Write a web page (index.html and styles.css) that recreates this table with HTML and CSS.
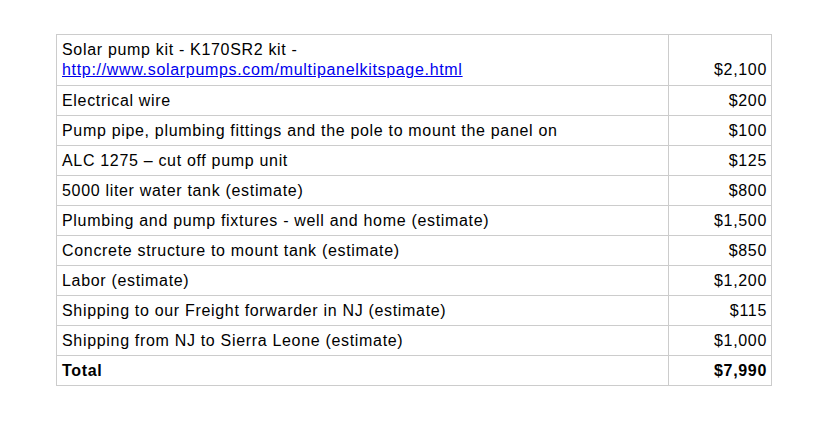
FILE: index.html
```html
<!DOCTYPE html>
<html lang="en">
<head>
<meta charset="utf-8">
<title>Solar pump budget</title>
<link rel="stylesheet" href="styles.css">
</head>
<body>
<table class="budget">
  <tbody>
    <tr class="first">
      <td class="item">Solar pump kit - K170SR2 kit -<br><a class="link" href="#">http://www.solarpumps.com/multipanelkitspage.html</a></td>
      <td class="cost">$2,100</td>
    </tr>
    <tr><td class="item">Electrical wire</td><td class="cost">$200</td></tr>
    <tr><td class="item">Pump pipe, plumbing fittings and the pole to mount the panel on</td><td class="cost">$100</td></tr>
    <tr><td class="item">ALC 1275 – cut off pump unit</td><td class="cost">$125</td></tr>
    <tr><td class="item">5000 liter water tank (estimate)</td><td class="cost">$800</td></tr>
    <tr><td class="item">Plumbing and pump fixtures - well and home (estimate)</td><td class="cost">$1,500</td></tr>
    <tr><td class="item">Concrete structure to mount tank (estimate)</td><td class="cost">$850</td></tr>
    <tr><td class="item">Labor (estimate)</td><td class="cost">$1,200</td></tr>
    <tr><td class="item">Shipping to our Freight forwarder in NJ (estimate)</td><td class="cost">$115</td></tr>
    <tr><td class="item">Shipping from NJ to Sierra Leone (estimate)</td><td class="cost">$1,000</td></tr>
    <tr class="total"><td class="item">Total</td><td class="cost">$7,990</td></tr>
  </tbody>
</table>
</body>
</html>
```

FILE: styles.css
```css
html, body {
  margin: 0;
  padding: 0;
  background: #ffffff;
}

body {
  padding: 34px 0 0 56px;
  font-family: "Liberation Sans", Arial, sans-serif;
  font-size: 16px;
  line-height: 20px;
  color: #000000;
}

.budget {
  border-collapse: collapse;
  width: 716px;
  table-layout: fixed;
}

.budget td {
  border: 1px solid #cccccc;
  padding: 5px 4px 4px 5px;
  vertical-align: bottom;
  letter-spacing: 0.68px;
  white-space: nowrap;
}

.budget .item {
  width: 602px;
}

.budget .cost {
  text-align: right;
}

.budget .first td {
  padding-bottom: 5px;
}

.link {
  color: #0000ee;
  text-decoration: underline;
}

.total td {
  font-weight: bold;
}
```
